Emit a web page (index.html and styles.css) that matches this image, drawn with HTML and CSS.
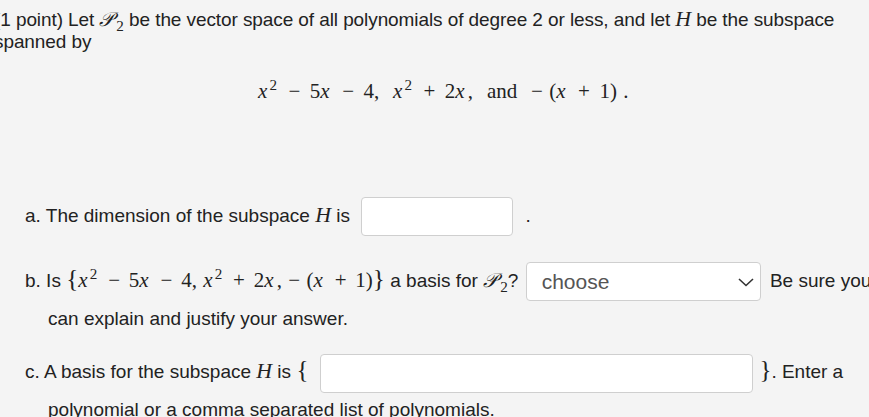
FILE: index.html
```html
<!DOCTYPE html>
<html>
<head>
<meta charset="utf-8">
<link rel="stylesheet" href="styles.css">
</head>
<body>
<div class="problem">
  <p class="intro">(1 point) Let <span class="cal">𝒫</span><sub class="sub">2</sub> be the vector space of all polynomials of degree 2 or less, and let <span class="mi">H</span> be the subspace spanned by</p>
  <div class="display"><span class="mi">x</span><sup class="sup">2</sup><span class="bin">−</span>5<span class="mi">x</span><span class="bin">−</span>4,<span class="gap"></span><span class="mi">x</span><sup class="sup">2</sup><span class="bin">+</span>2<span class="mi">x</span>,<span class="gap"></span>and<span class="gap"></span>−<span class="thin"></span>(<span class="mi">x</span><span class="bin">+</span>1)<span class="thin"></span>.</div>
  <p class="part part-a">a. The dimension of the subspace <span class="mi">H</span> is <input class="answer answer-short" type="text"> .</p>
  <p class="part part-b">b. Is <span class="math"><span class="brace">{</span><span class="mi">x</span><sup class="sup">2</sup><span class="bin">−</span>5<span class="mi">x</span><span class="bin">−</span>4,<span class="comma"></span><span class="mi">x</span><sup class="sup">2</sup><span class="bin">+</span>2<span class="mi">x</span>,<span class="comma"></span>−<span class="thin"></span>(<span class="mi">x</span><span class="bin">+</span>1)<span class="brace">}</span></span> a basis for <span class="cal">𝒫</span><sub class="sub">2</sub>? <span class="select-wrap"><select class="choice"><option>choose</option><option>Yes</option><option>No</option></select><svg class="chevron" width="16" height="9" viewBox="0 0 16 9"><path d="M1 1 L8 7.5 L15 1" fill="none" stroke="#333" stroke-width="1.6"/></svg></span> Be sure you can explain and justify your answer.</p>
  <p class="part part-c">c. A basis for the subspace <span class="mi">H</span> is <span class="set-brace">{</span><input class="answer answer-long" type="text"><span class="set-brace">}</span>. Enter a polynomial or a comma separated list of polynomials.</p>
</div>
</body>
</html>
```

FILE: styles.css
```css
html {
  overflow: hidden;
  background: #f4f4f4;
}
body {
  margin: 0;
  background: #f4f4f4;
  color: #222;
  font-family: "Liberation Sans", Arial, sans-serif;
  font-size: 19px;
}
.problem {
  margin-left: -6px;
  width: 892px;
  padding-top: 8px;
}
p {
  margin: 0;
}
.intro {
  line-height: 22px;
  letter-spacing: -0.09px;
}
.mi {
  font-family: "Liberation Serif", serif;
  font-style: italic;
  font-size: 1.15em;
}
.cal {
  font-family: "DejaVu Serif", "Liberation Serif", serif;
  font-style: italic;
  font-size: 1.05em;
}
.sub {
  font-family: "Liberation Serif", serif;
  font-size: 0.8em;
  vertical-align: -0.3em;
  line-height: 0;
  margin-left: 3px;
}
.sup {
  font-size: 0.72em;
  vertical-align: 0.55em;
  line-height: 0;
  margin-left: -1px;
  margin-right: 2px;
}
.display {
  font-family: "Liberation Serif", serif;
  font-size: 21px;
  margin: 26px 0 0 264px;
  line-height: 24px;
}
.display .mi, .math .mi {
  font-size: 1em;
  margin-right: 0.15em;
}
.bin {
  margin: 0 0.42em;
}
.display .bin {
  margin: 0 0.45em;
}
.gap {
  display: inline-block;
  width: 0.66em;
}
.thin {
  display: inline-block;
  width: 0.3em;
}
.comma {
  display: inline-block;
  width: 0.3em;
}
.part {
  padding-left: 54px;
  text-indent: -23px;
  line-height: 35px;
}
.part-a {
  margin-top: 94px;
}
.part-b {
  margin-top: 25px;
}
.part-c {
  margin-top: 17px;
  line-height: 33px;
}
.math {
  font-family: "Liberation Serif", serif;
  font-size: 21px;
}
.brace {
  font-size: 1.2em;
}
.answer {
  box-sizing: border-box;
  height: 39px;
  border: 1px solid #cfcfcf;
  border-radius: 4px;
  background: #fff;
  vertical-align: middle;
  text-indent: 0;
  font-size: 18px;
  padding: 0 8px;
}
.answer-short {
  width: 152px;
  margin: 0 7px 0 6px;
}
.answer-long {
  width: 433px;
  margin: 0 6px 0 12px;
}
.set-brace {
  font-family: "Liberation Serif", serif;
  font-size: 25px;
}
.select-wrap {
  position: relative;
  display: inline-block;
  vertical-align: middle;
  text-indent: 0;
  margin: 0 4px 0 2px;
  line-height: 0;
}
.choice {
  appearance: none;
  -webkit-appearance: none;
  box-sizing: border-box;
  width: 235px;
  height: 39px;
  border: 1px solid #cfcfcf;
  border-radius: 4px;
  background: #fff;
  color: #555;
  font-family: "Liberation Sans", Arial, sans-serif;
  font-size: 21px;
  padding: 0 0 0 15px;
}
.chevron {
  position: absolute;
  right: 7px;
  top: 16px;
  pointer-events: none;
}
```
